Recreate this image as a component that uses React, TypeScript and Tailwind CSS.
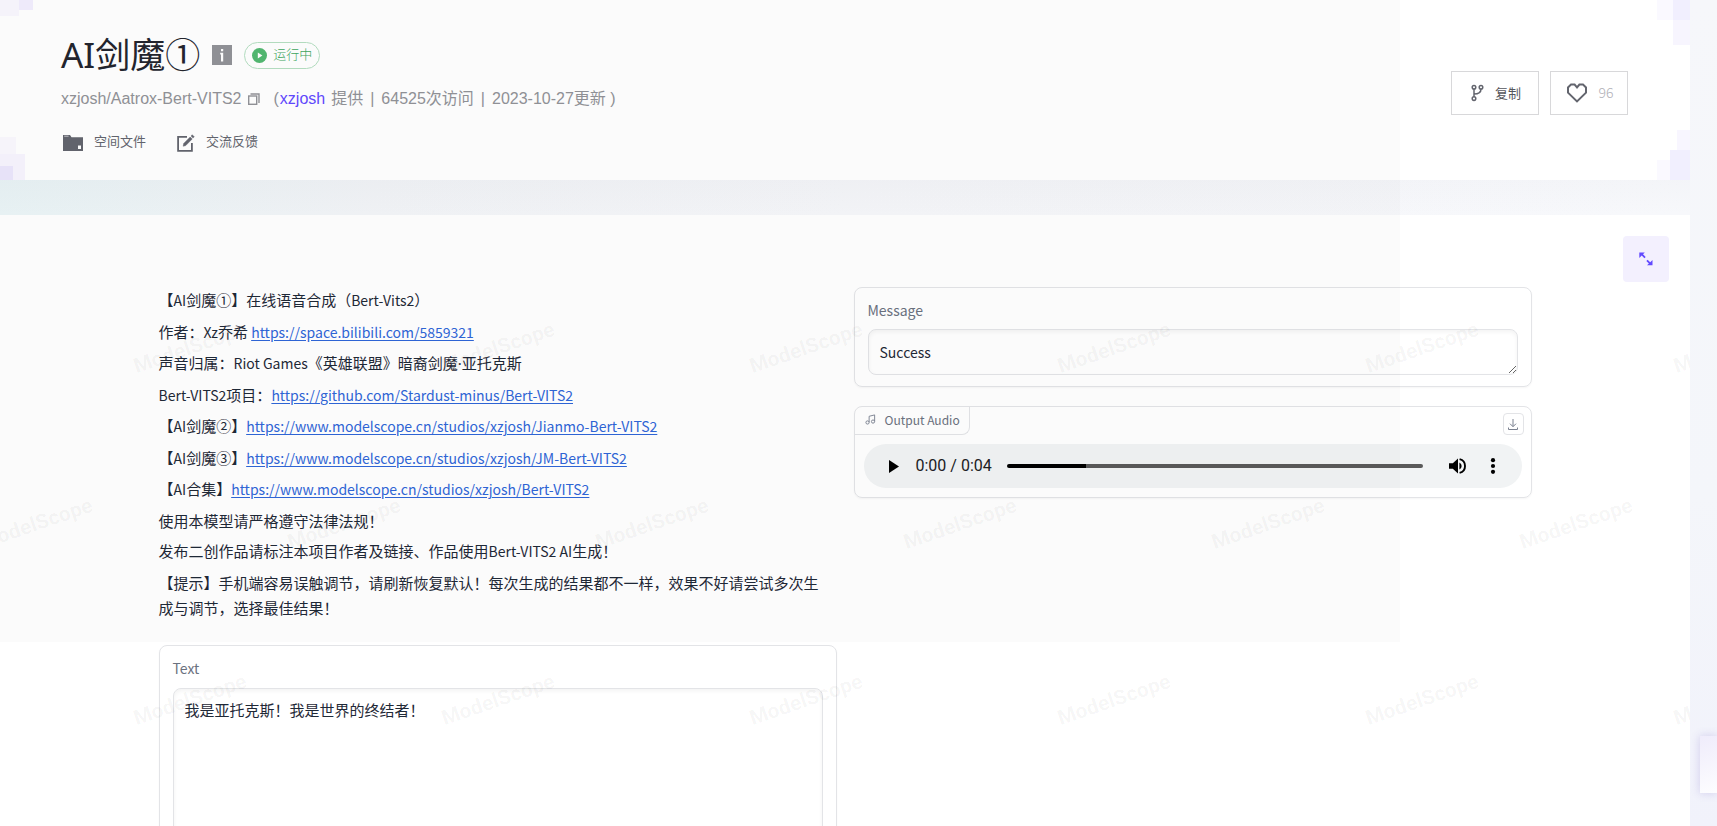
import React from "react";

const sans = "font-['Noto_Sans_CJK_SC',sans-serif]";

type Line = { text: string; href?: string };

const lines: Line[] = [
  { text: "【AI剑魔①】在线语音合成（Bert-Vits2）" },
  { text: "作者：Xz乔希 ", href: "https://space.bilibili.com/5859321" },
  { text: "声音归属：Riot Games《英雄联盟》暗裔剑魔·亚托克斯" },
  { text: "Bert-VITS2项目：", href: "https://github.com/Stardust-minus/Bert-VITS2" },
  { text: "【AI剑魔②】", href: "https://www.modelscope.cn/studios/xzjosh/Jianmo-Bert-VITS2" },
  { text: "【AI剑魔③】", href: "https://www.modelscope.cn/studios/xzjosh/JM-Bert-VITS2" },
  { text: "【AI合集】", href: "https://www.modelscope.cn/studios/xzjosh/Bert-VITS2" },
  { text: "使用本模型请严格遵守法律法规！" },
  { text: "发布二创作品请标注本项目作者及链接、作品使用Bert-VITS2 AI生成！" },
  {
    text: "【提示】手机端容易误触调节，请刷新恢复默认！每次生成的结果都不一样，效果不好请尝试多次生成与调节，选择最佳结果！",
  },
];

function HeaderCorners() {
  return (
    <div aria-hidden="true" className="pointer-events-none absolute inset-0">
      <svg className="absolute left-0 top-0" width="33" height="16">
        <rect width="19" height="16" fill="#f9f7fe" />
        <rect x="19" width="14" height="10" fill="#f2eefe" />
      </svg>
      <svg className="absolute bottom-0 left-0" width="25" height="43">
        <rect width="16" height="17" fill="#faf8fe" />
        <rect y="17" width="25" height="26" fill="#f7f4fe" />
        <rect y="29" width="13" height="14" fill="#ebe6fc" />
      </svg>
      <svg className="absolute right-0 top-0" width="33" height="45">
        <rect width="16" height="20" fill="#faf9ff" />
        <rect x="16" width="17" height="20" fill="#f1effe" />
        <rect x="16" y="20" width="17" height="25" fill="#f7f5fe" />
      </svg>
      <svg className="absolute bottom-0 right-0" width="33" height="50">
        <rect x="20" width="13" height="20" fill="#f8f6ff" />
        <rect x="13" y="20" width="20" height="30" fill="#f1effe" />
        <rect y="30" width="13" height="20" fill="#faf9ff" />
      </svg>
    </div>
  );
}

function Header() {
  return (
    <header className="relative flex h-[180px] items-start justify-between bg-white pl-[61px] pr-[62px] pt-[30px]">
      <HeaderCorners />
      <div className="relative">
        <div className="flex h-[50px] items-center">
          <h1 className="font-['Noto_Sans','Noto_Sans_CJK_SC',sans-serif] text-[35px] leading-[50px] text-[#23252e]">
            AI剑魔①
          </h1>
          <svg className="ml-3" width="20" height="20" viewBox="0 0 20 20" role="img" aria-label="说明">
            <rect width="20" height="20" fill="#929398" />
            <path d="M9 4h2.2v2.2H9zM8.2 7.8h3v8.8H9V9.4h-.8z" fill="#fff" />
          </svg>
          <span className="ml-3 flex h-[27px] items-center gap-[6px] rounded-full border border-[#b5dfc2] px-[7px] text-[13px] font-light leading-none text-[#41a860]">
            <svg width="15" height="15" viewBox="0 0 15 15" aria-hidden="true">
              <circle cx="7.5" cy="7.5" r="7.5" fill="#53b871" />
              <path d="M5.8 4.6l4.6 2.9-4.6 2.9z" fill="#fff" />
            </svg>
            <span className="pb-[3px]">运行中</span>
          </span>
        </div>
        <div className="mt-[7px] flex h-6 items-center font-['Liberation_Sans','Noto_Sans_CJK_SC',sans-serif] text-[16px] leading-6 text-[#929398]">
          <span>xzjosh/Aatrox-Bert-VITS2</span>
          <button type="button" aria-label="复制名称" className="ml-[6px]">
            <svg width="12" height="12" viewBox="0 0 12 12" fill="none" stroke="#929398" strokeWidth="1.4">
              <path d="M2.5 1H11v9" />
              <rect x=".7" y="3" width="8" height="8.3" />
            </svg>
          </button>
          <span className="ml-[14px]">(</span>
          <a href="#xzjosh" className="ml-px text-[#624aff]">xzjosh</a>
          <span className="ml-[6px]">提供</span>
          <span className="mx-[7px]">|</span>
          <span>64525次访问</span>
          <span className="mx-[7px]">|</span>
          <span>2023-10-27更新 )</span>
        </div>
        <nav className="mt-[18px] flex h-6 items-center text-[13px] leading-6 text-[#63656e]">
          <a href="#files" className="flex items-center gap-[11px]">
            <svg width="20" height="16" viewBox="0 0 20 16" aria-hidden="true" className="ml-[2px] mt-[3px]">
              <path d="M0 0h7l1.5 2.2H20V16H0z" fill="#63656e" />
              <path d="M1.2 1.2h4.4" stroke="#c4c5ca" />
              <rect x="15" y="10.5" width="3" height="3.5" fill="#fff" />
            </svg>
            空间文件
          </a>
          <a href="#feedback" className="ml-[31px] flex items-center gap-[11px]">
            <svg width="18" height="18" viewBox="0 0 18 18" aria-hidden="true" fill="none" stroke="#63656e" className="mt-[3px]">
              <path d="M10 2.9H1.1v14h13.8V9" strokeWidth="1.8" />
              <path d="M6.2 12.2l.5-2.7L13.2 3l2 2-6.5 6.6z" fill="#63656e" strokeWidth=".5" />
              <path d="M14 2l1.2-1.3 2.1 2.1L16 4.1z" fill="#63656e" strokeWidth=".4" />
            </svg>
            交流反馈
          </a>
        </nav>
      </div>
      <div className="relative mt-[41px] flex gap-[11px]">
        <button
          type="button"
          className="flex h-11 w-[88px] items-center justify-center gap-[11px] border border-[#d8d8da] pb-px pl-[2px] text-[13px] text-[#55565c]"
        >
          <svg width="13" height="18" viewBox="0 0 13 18" aria-hidden="true" fill="none" stroke="#63656e" strokeWidth="1.5">
            <circle cx="3" cy="3.2" r="1.8" />
            <circle cx="10" cy="3.2" r="1.8" />
            <circle cx="3" cy="14.6" r="1.8" />
            <path d="M3 5v7.8M10 5c0 4-3 5-7 5" />
          </svg>
          复制
        </button>
        <button
          type="button"
          aria-label="喜欢 96"
          className="flex h-11 w-[78px] items-center justify-center gap-3 border border-[#d8d8da] pb-px pl-[2px] text-[14px] font-light text-[#b0b0b6]"
        >
          <svg width="20" height="20" viewBox="0 0 20 20" aria-hidden="true" fill="none" stroke="#63656e" strokeWidth="2">
            <path d="M10 4.4L7.6 1.6H4L1 4.4v5.2l9 8.8 9-8.8V4.4l-3-2.8h-3.6z" />
          </svg>
          96
        </button>
      </div>
    </header>
  );
}

function Watermark() {
  return (
    <div
      aria-hidden="true"
      className="pointer-events-none absolute inset-0 select-none overflow-hidden font-['Roboto',sans-serif] text-[21px] font-extrabold leading-6 text-black/[0.035]"
    >
      <div className="flex flex-col gap-[152px] pt-[121px]">
        {["ml-[131px]", "-ml-[23px]", "ml-[131px]"].map((offset, row) => (
          <div key={row} className={`flex gap-[192px] ${offset}`}>
            {Array.from({ length: 6 }, (_, i) => (
              <span key={i} className="w-[116px] shrink-0 -rotate-[19deg] text-center">
                ModelScope
              </span>
            ))}
          </div>
        ))}
      </div>
    </div>
  );
}

const card = "rounded-lg border border-[#e3e4e7] shadow-[0_1px_2px_rgba(0,0,0,0.04)]";
const field =
  "block w-full rounded-lg border border-[#e3e4e7] bg-transparent px-[11px] text-[#1f2937] shadow-[inset_0_2px_4px_rgba(0,0,0,0.05)] outline-none";

/* Latin runs are set one step smaller than the Chinese around them. */
function MixedText({ text }: { text: string }) {
  return (
    <>
      {text.split(/([A-Za-z0-9\- ]+|·)/).map((part, i) => {
        if (i % 2 === 0) return part;
        return part === "·" ? (
          <span key={i} className="font-['Noto_Sans',sans-serif]">·</span>
        ) : (
          <span key={i} className="text-[14px]">{part}</span>
        );
      })}
    </>
  );
}

function AudioPlayer() {
  return (
    <div className="mx-[9px] mt-[9px] flex h-11 items-center rounded-full bg-[#f1f3f4] pl-[25px] pr-[26px]">
      <button type="button" aria-label="播放">
        <svg width="10" height="13" viewBox="0 0 10 13">
          <path d="M0 0l10 6.5L0 13z" fill="#000" />
        </svg>
      </button>
      <span className="ml-[17px] whitespace-nowrap font-['Roboto',sans-serif] text-[16px] text-[#202124]">0:00 / 0:04</span>
      <input
        type="range"
        aria-label="播放进度"
        min={0}
        max={100}
        defaultValue={0}
        className="ml-[15px] h-1 min-w-0 flex-1 appearance-none rounded-full bg-[linear-gradient(to_right,#000_19%,#5a5a5a_19%)] [&::-webkit-slider-thumb]:h-0 [&::-webkit-slider-thumb]:w-0 [&::-webkit-slider-thumb]:appearance-none"
      />
      <button type="button" aria-label="音量" className="ml-[26px]">
        <svg width="17" height="16" viewBox="0 0 17 16" fill="#000">
          <path d="M0 5.2h3.8L9 .4v15.2l-5.2-4.8H0z" />
          <path d="M10.4 4.4a4 4 0 010 7.2z" />
          <path d="M10.6 1.1a7.1 7.1 0 010 13.8" fill="none" stroke="#000" strokeWidth="1.9" />
        </svg>
      </button>
      <button type="button" aria-label="更多选项" className="ml-6">
        <svg width="6" height="16" viewBox="0 0 6 16" fill="#000">
          <circle cx="3" cy="2.2" r="2.1" />
          <circle cx="3" cy="8" r="2.1" />
          <circle cx="3" cy="13.8" r="2.1" />
        </svg>
      </button>
    </div>
  );
}

export default function App() {
  return (
    <div className={`relative h-screen overflow-hidden bg-[linear-gradient(180deg,#f6f7fa_0%,#f4f6fa_60%,#f1f2fb_100%)] ${sans}`}>
      <div className="mr-[27px] flex h-full flex-col">
        <Header />
        <div className="h-[35px] shrink-0 bg-[linear-gradient(180deg,rgba(90,100,130,0.025),rgba(90,100,130,0)),linear-gradient(90deg,#ebf5f7_0%,#f3f5f8_22%,#f6f7fa_50%,#f7f8fb_100%)]" />
        <main className="relative flex-1 overflow-hidden bg-white">
          <button
            type="button"
            aria-label="全屏"
            className="absolute right-[21px] top-[21px] flex h-[46px] w-[46px] items-center justify-center rounded-sm bg-[#f3f0fe]"
          >
            <svg width="14" height="14" viewBox="0 0 14 14" fill="#624aff">
              <path d="M.3.5h5.5L4 2.3l2.7 2.6-1.3 1.3-2.7-2.6L.3 6zM13.5 13.3H8l1.9-1.8L7.3 9l1.3-1.3 2.6 2.6 2.3-2.3z" />
            </svg>
          </button>
          <div className="mx-auto grid max-w-[1373px] grid-cols-2 gap-[17px] pt-[72px]">
            <section>
              <div className="flex min-h-[333px] flex-col justify-between pr-2 text-[15px] leading-[25px] text-[#1f2937]">
                {lines.map((line) => (
                  <p key={line.text}>
                    <MixedText text={line.text} />
                    {line.href && (
                      <a href={line.href} className="text-[14px] text-[#2f66d8] underline underline-offset-2">
                        {line.href}
                      </a>
                    )}
                  </p>
                ))}
              </div>
              <div className={`mt-[25px] px-[13px] pb-4 pt-[10px] ${card}`}>
                <label htmlFor="text" className="block text-[14px] leading-6 text-[#6b7280]">
                  Text
                </label>
                <textarea
                  id="text"
                  rows={8}
                  defaultValue="我是亚托克斯！我是世界的终结者！"
                  className={`mt-2 py-[10px] text-[15px] leading-[22px] ${field}`}
                />
              </div>
            </section>
            <section className="flex flex-col gap-[19px]">
              <div className={`px-[13px] pb-[11px] pt-[10px] ${card}`}>
                <label htmlFor="message" className="block text-[14px] leading-6 text-[#6b7280]">
                  Message
                </label>
                <textarea
                  id="message"
                  rows={1}
                  defaultValue="Success"
                  className={`mt-[7px] h-[46px] py-[11px] text-[14px] leading-[22px] ${field}`}
                />
              </div>
              <div className={`relative h-[92px] ${card}`}>
                <div className="flex items-start justify-between">
                  <div className="flex h-7 items-center gap-[9px] rounded-br-lg border-b border-r border-[#e3e4e7] pb-[2px] pl-[10px] pr-[9px] text-[12px] text-[#6b7280]">
                    <svg width="11" height="11" viewBox="0 0 24 24" fill="none" stroke="#7b8190" strokeWidth="2" aria-hidden="true">
                      <path d="M9 18V5l12-3v14" />
                      <circle cx="5.5" cy="18.5" r="3.5" />
                      <circle cx="17.5" cy="16.5" r="3.5" />
                    </svg>
                    Output Audio
                  </div>
                </div>
                <button
                  type="button"
                  aria-label="下载"
                  className="absolute right-[7px] top-[6px] flex h-[22px] w-[21px] items-center justify-center rounded border border-[#e3e4e7]"
                >
                  <svg width="10" height="11" viewBox="0 0 10 11" fill="none" stroke="#7b8190">
                    <path d="M5 0v7.5M2 4.7l3 3 3-3M.5 8.5v2h9v-2" />
                  </svg>
                </button>
                <AudioPlayer />
              </div>
            </section>
          </div>
          <Watermark />
        </main>
      </div>
      <div aria-hidden="true" className="pointer-events-none absolute left-0 top-0 h-[642px] w-[1400px] bg-black/[0.016]" />
      <aside className="absolute bottom-[33px] right-0 h-[57px] w-[17px] bg-[linear-gradient(160deg,#efecfb,#fdfdff)] shadow-[0_0_10px_rgba(90,70,180,0.22)]" />
    </div>
  );
}
